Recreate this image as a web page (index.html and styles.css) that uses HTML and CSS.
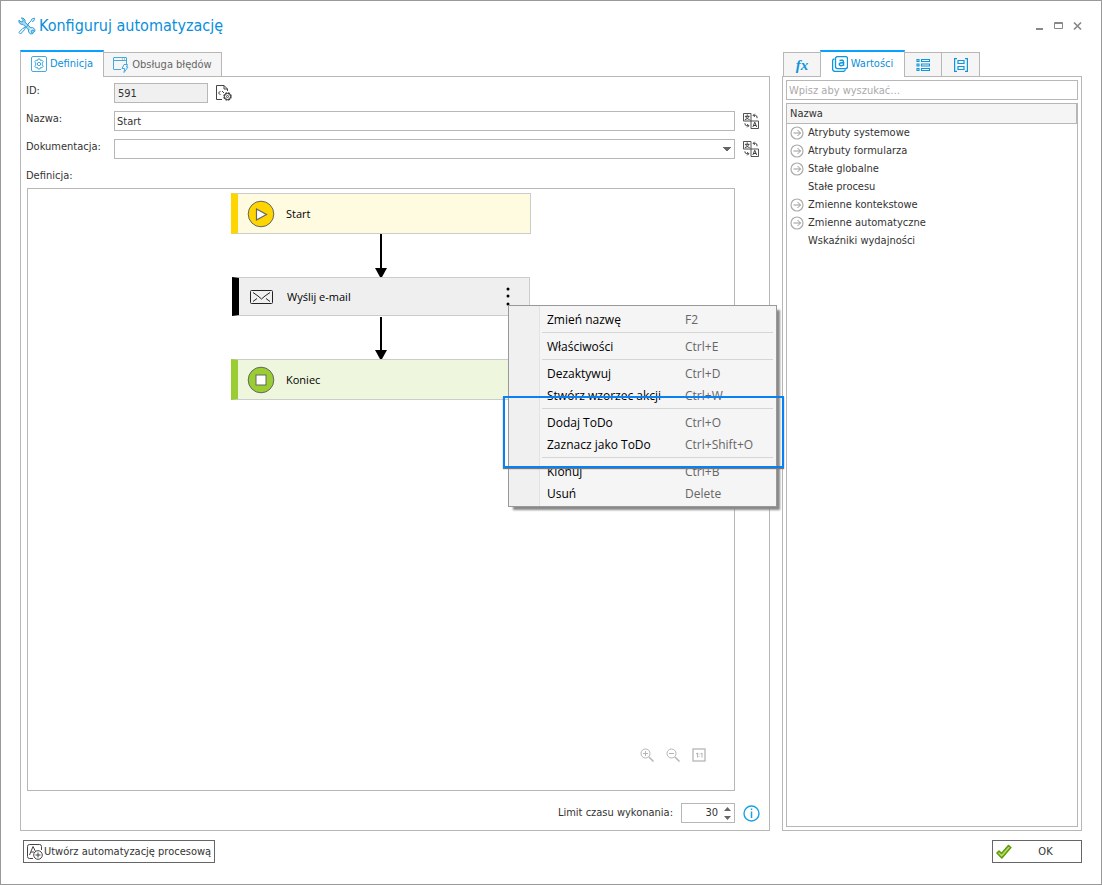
FILE: index.html
```
<!DOCTYPE html>
<html lang="pl">
<head>
<meta charset="utf-8">
<title>Konfiguruj automatyzację</title>
<link rel="stylesheet" href="styles.css">
</head>
<body>
<svg class="defs" aria-hidden="true">
  <symbol id="translate" viewBox="0 0 17 17">
    <path d="M.5.5h8v8h-8zM8.500 8.500h8v8h-8z" fill="none" stroke="#444"/>
    <path d="M4.500 1.500V3M2 3.500h5M3 3.500c.5 2 2 3 4 3.500M6 3.500c-.5 2-2 3-4 3.500" fill="none" stroke="#333"/>
    <path d="M10.500 14.800l2-5 2 5M11.200 13.300h2.600" fill="none" stroke="#333"/>
    <path d="M11 2.500h2.500q1.500 0 1.500 3M12.500 .8l-1.700 1.700 1.700 1.700M2 11q0 2.500 2 2.500h2M4.500 11.800l1.700 1.700-1.700 1.700" fill="none" stroke="#333"/>
  </symbol>
  <symbol id="expand" viewBox="0 0 14 14">
    <circle cx="7" cy="7" r="6" fill="none" stroke="#aaa" stroke-width="1.200"/>
    <path d="M3.500 7h7M7.500 4l3 3-3 3" fill="none" stroke="#999"/>
  </symbol>
</svg>
<div class="window">
  <header class="titlebar">
    <svg class="title-icon" viewBox="0 0 18 18" fill="none" stroke="#2a9bd8">
      <path d="M7 5.200l8.500 8.300a1.500 1.500 0 0 1-2.200 2.200L5 7.300a3.300 3.300 0 0 1-4-4.200l2 1.800 1.800-.4.400-1.700L3.300 1A3.300 3.300 0 0 1 7 5.200z" fill="#a9d9f2"/>
      <path d="M16.500 1l-2.800 1.200-.6 1.700L9.500 7.500M7.700 9.500L6 11l-1 .2L1 15.300 2.500 17l4-4.300.2-1L11 7.500M14 4.500l1.700-.5 1-2.700"/>
      <path d="M11 12.200a3 3 0 0 0 3.800 4.400l-1.600-1.700.5-1.500 1.600-.3 1.500 1.400a3 3 0 0 0-4-3.700" fill="#d8effa"/>
    </svg>
    <h1 class="title">Konfiguruj automatyzację</h1>
    <div class="window-buttons">
      <button aria-label="Minimalizuj"><svg viewBox="0 0 10 10"><path d="M1 8h7" stroke="#888" stroke-width="2"/></svg></button>
      <button aria-label="Maksymalizuj"><svg viewBox="0 0 10 10"><path d="M.5 1.500h8v6h-8zM.5 2.500h8" fill="none" stroke="#888"/></svg></button>
      <button aria-label="Zamknij"><svg viewBox="0 0 10 10"><path d="M1 1.500l7 7M8 1.500l-7 7" stroke="#888" stroke-width="1.700"/></svg></button>
    </div>
  </header>

  <main class="content">
    <section class="pane">
      <div class="tabs" role="tablist">
        <button class="tab tab-active tab-definition" role="tab" aria-selected="true">
          <svg class="icon16" viewBox="0 0 16 16" fill="none" stroke="#45a9df"><rect x=".5" y=".5" width="15" height="15" rx="1.500"/><circle cx="8" cy="8" r="1.700"/><path d="M7 3h2l.5 1.500 1.500-.3 1.300 1.600-1 1.200v2l1 1.200-1.300 1.600-1.500-.3L9 13H7l-.5-1.500-1.500.3-1.300-1.600 1-1.200V7l-1-1.200L5 4.200l1.500.3z"/></svg>
          <span>Definicja</span>
        </button>
        <button class="tab tab-errors" role="tab" aria-selected="false">
          <svg class="icon16" viewBox="0 0 16 16" fill="none" stroke="#45a9df"><path d="M8 12.500H1a.5.5 0 0 1-.5-.5V1A.5.5 0 0 1 1 .5h12a.5.500 0 0 1 .5.500v6M.5 3.500h13M9 2h1M11 2h1M11 7.500h3.500l-1 2.500h1.500l-4 5.500.7-4H9z"/></svg>
          <span>Obsługa błędów</span>
        </button>
      </div>
      <div class="panel form-panel">
        <div class="field">
          <label for="id">ID:</label>
          <input class="box id-box" id="id" value="591" readonly>
          <button class="bare id-icon" aria-label="Konfiguracja ID"><svg class="icon16" viewBox="0 0 16 16" fill="none" stroke="#444"><path d="M6 14.500H.5V.5H8L11.500 4v2M8 .5V4h3.500M4.500 6L2.500 8l2 2M6 6l2 2"/><circle cx="11.500" cy="11.500" r="3.500" stroke-width="1.500" stroke-dasharray="2 .75"/><circle cx="11.500" cy="11.500" r="3"/><circle cx="11.500" cy="11.500" r="1"/></svg></button>
        </div>
        <div class="field">
          <label for="name">Nazwa:</label>
          <input class="box" id="name" value="Start">
          <button class="bare" aria-label="Tłumacz nazwę"><svg class="icon16"><use href="#translate"/></svg></button>
        </div>
        <div class="field">
          <label for="doc">Dokumentacja:</label>
          <select class="box drop" id="doc"><option></option></select>
          <button class="bare" aria-label="Tłumacz dokumentację"><svg class="icon16"><use href="#translate"/></svg></button>
        </div>
        <div class="canvas-label">Definicja:</div>
        <div class="canvas">
          <div class="flow">
            <div class="node node-start">
              <svg class="node-icon" viewBox="0 0 28 28"><circle cx="14" cy="14" r="12.800" fill="#ffd500" stroke="#666"/><path d="M9.500 9v11l10-5.500z" fill="#fff" stroke="#666" stroke-width="1.200"/></svg>
              <span>Start</span>
            </div>
            <svg class="arrow" viewBox="0 0 12 43"><path d="M6 0v36" stroke="#000" stroke-width="2"/><path d="M0 34h12l-5 9H5z"/></svg>
            <div class="node node-mail">
              <svg class="node-icon" viewBox="0 0 28 28" fill="none" stroke="#222"><rect x="2.500" y="7.500" width="22" height="13" rx="1"/><path d="M5 9.500l5 3.500 3.500 3 3.500-3 5-3.500M5 18.500l4-3M22 18.500l-4-3"/></svg>
              <span>Wyślij e-mail</span>
              <button class="bare more" aria-label="Więcej"><svg viewBox="0 0 4 20"><circle cx="2" cy="2" r="1.500"/><circle cx="2" cy="9" r="1.500"/><circle cx="2" cy="17" r="1.500"/></svg></button>
              <div class="popup">
                <div class="menu" role="menu">
                  <button class="item" role="menuitem"><span>Zmień nazwę</span><kbd>F2</kbd></button>
                  <hr>
                  <button class="item" role="menuitem"><span>Właściwości</span><kbd>Ctrl+E</kbd></button>
                  <hr>
                  <button class="item" role="menuitem"><span>Dezaktywuj</span><kbd>Ctrl+D</kbd></button>
                  <button class="item" role="menuitem"><span>Stwórz wzorzec akcji</span><kbd>Ctrl+W</kbd></button>
                  <hr>
                  <button class="item" role="menuitem"><span>Dodaj ToDo</span><kbd>Ctrl+O</kbd></button>
                  <button class="item" role="menuitem"><span>Zaznacz jako ToDo</span><kbd>Ctrl+Shift+O</kbd></button>
                  <hr>
                  <button class="item" role="menuitem"><span>Klonuj</span><kbd>Ctrl+B</kbd></button>
                  <button class="item" role="menuitem"><span>Usuń</span><kbd>Delete</kbd></button>
                </div>
                <div class="highlight"></div>
              </div>
            </div>
            <svg class="arrow" viewBox="0 0 12 43"><path d="M6 1v35" stroke="#000" stroke-width="2"/><path d="M0 34h12l-5 9H5z"/></svg>
            <div class="node node-end">
              <svg class="node-icon" viewBox="0 0 28 28"><circle cx="14" cy="14" r="12.800" fill="#9acd32" stroke="#666"/><rect x="9" y="9" width="10" height="10" fill="#fff" stroke="#666"/></svg>
              <span>Koniec</span>
            </div>
          </div>
          <div class="zoom-tools">
            <button class="bare" aria-label="Powiększ"><svg class="icon14" viewBox="0 0 14 14" fill="none" stroke="#b5b5b5"><circle cx="5.500" cy="5.500" r="4.500"/><path d="M9 9l4.500 4.500" stroke-width="1.500"/><path d="M3 5.500h5M5.500 3v5"/></svg></button>
            <button class="bare" aria-label="Pomniejsz"><svg class="icon14" viewBox="0 0 14 14" fill="none" stroke="#b5b5b5"><circle cx="5.500" cy="5.500" r="4.500"/><path d="M9 9l4.500 4.500" stroke-width="1.500"/><path d="M3 5.500h5"/></svg></button>
            <button class="bare" aria-label="Skala 1:1"><svg class="icon14" viewBox="0 0 14 14" fill="none" stroke="#b5b5b5"><rect x="1" y="1" width="12" height="12" stroke-width="1.300"/><path d="M4 6l1.500-1v4.500M8.500 6l1.500-1v4.500M7 5.500v1M7 8v1"/></svg></button>
          </div>
        </div>
        <div class="limit">
          <label for="limit">Limit czasu wykonania:</label>
          <div class="spin box">
            <input id="limit" value="30" inputmode="numeric">
            <div class="spin-buttons">
              <button class="bare" aria-label="Zwiększ"><svg viewBox="0 0 7 4"><path d="M0 4l3.500-4L7 4z" fill="#666"/></svg></button>
              <button class="bare" aria-label="Zmniejsz"><svg viewBox="0 0 7 4"><path d="M0 0l3.500 4L7 0z" fill="#666"/></svg></button>
            </div>
          </div>
          <button class="bare" aria-label="Informacja"><svg class="icon17" viewBox="0 0 17 17"><circle cx="8.500" cy="8.500" r="7.500" fill="none" stroke="#1ba1e2" stroke-width="1.400"/><path d="M8.500 3.500V5M8.500 6.500V13" stroke="#1ba1e2" stroke-width="1.500"/></svg></button>
        </div>
      </div>
    </section>

    <aside class="pane side">
      <div class="tabs side-tabs" role="tablist">
        <button class="tab tab-icon" role="tab" aria-label="Funkcje"><span class="fx">fx</span></button>
        <button class="tab tab-active tab-values" role="tab" aria-selected="true">
          <svg class="icon16" viewBox="0 0 16 16" fill="none" stroke="#0f95dc"><rect x="3.500" y=".6" width="12" height="12" rx="2" stroke-width="1.300"/><path d="M2.500 3Q.6 3 .6 5v8q0 2.400 2.400 2.400h8q2 0 2.500-2" stroke-width="1.300"/><path d="M7.500 4.500q4-1.200 4 1.500v3.800M11.500 6.800q-4.200-.5-4.200 1.500 0 2.200 4.200.8" stroke-width="1.500"/></svg>
          <span>Wartości</span>
        </button>
        <button class="tab tab-icon" role="tab" aria-label="Lista"><svg class="icon14" viewBox="0 0 14 14" fill="none" stroke="#0f95dc" stroke-width="1.100"><path d="M1 1.500h2v2H1zM1 6h2v2H1zM1 10.500h2v2H1zM5.500 1.500h8v2h-8zM5.500 6h8v2h-8zM5.500 10.500h8v2h-8z"/></svg></button>
        <button class="tab tab-icon" role="tab" aria-label="Kontekst"><svg class="icon14" viewBox="0 0 14 14" fill="none" stroke="#0f95dc" stroke-width="1.200"><path d="M3 .6H.6v12.800H3M11 .6h2.400v12.800H11M4 2.500h6v3H4zM4 8.500h6v3H4z"/></svg></button>
      </div>
      <div class="panel side-panel">
        <input class="box search" type="search" placeholder="Wpisz aby wyszukać…" aria-label="Szukaj">
        <div class="tree">
          <div class="tree-head">Nazwa</div>
          <ul class="tree-list">
            <li><svg><use href="#expand"/></svg><span>Atrybuty systemowe</span></li>
            <li><svg><use href="#expand"/></svg><span>Atrybuty formularza</span></li>
            <li><svg><use href="#expand"/></svg><span>Stałe globalne</span></li>
            <li><svg></svg><span>Stałe procesu</span></li>
            <li><svg><use href="#expand"/></svg><span>Zmienne kontekstowe</span></li>
            <li><svg><use href="#expand"/></svg><span>Zmienne automatyczne</span></li>
            <li><svg></svg><span>Wskaźniki wydajności</span></li>
          </ul>
        </div>
      </div>
    </aside>
  </main>

  <footer class="footer">
    <button class="action">
      <svg class="icon16" viewBox="0 0 16 16" fill="none" stroke="#444"><path d="M6 14.500H2.500q-2 0-2-2v-10q0-2 2-2h10q2 0 2 2V6M2.500 11L6 2.500l2.500 5M4 8h3"/><circle cx="11" cy="11" r="4.300"/><path d="M8.500 11h5M11 8.500v5"/></svg>
      <span>Utwórz automatyzację procesową</span>
    </button>
    <button class="action ok">
      <svg class="icon16" viewBox="0 0 16 16"><path d="M1 9l2-2 2.500 2.500L12.500 1.500l2.300 2L5.800 14z" fill="#b9da7d" stroke="#5f9e00" stroke-width="1.600" stroke-linejoin="round"/></svg>
      <span>OK</span>
    </button>
  </footer>
</div>
</body>
</html>
```
FILE: styles.css
```
* { box-sizing: border-box; }
body { margin: 0; font: 11px/16px "DejaVu Sans Condensed", "Open Sans", sans-serif; color: #333; background: #fff; }
button, input, select { font: inherit; color: inherit; margin: 0; }
button { padding: 0; border: 0; background: none; }
svg { display: block; flex: none; }
.defs { position: absolute; width: 0; height: 0; }
.icon14 { width: 14px; height: 14px; }
.icon16 { width: 16px; height: 16px; }
.icon17 { width: 17px; height: 17px; }
.bare { flex: none; }

.window { min-height: 100vh; display: flex; flex-direction: column; border: 1px solid #999; padding: 0 19px 21px; }
.titlebar { display: flex; align-items: center; height: 50px; margin: 0 -1px 0 -2px; gap: 3px; }
.title-icon { width: 18px; height: 18px; }
.title { margin: 0; flex: 1; font-size: 16px; line-height: 24px; font-weight: 400; color: #0a8fdc; }
.window-buttons { display: flex; gap: 9px; }
.window-buttons svg { width: 10px; height: 10px; }

.content { flex: 1; display: flex; gap: 12px; }
.pane { flex: 1; min-width: 0; display: flex; flex-direction: column; }
.side { flex: 0 0 300px; }
.tabs { display: flex; align-items: flex-end; height: 27px; margin: -1px 0; }
.side-tabs { padding-left: 1px; }
.tab { display: flex; align-items: center; justify-content: center; gap: 3px; height: 25px; border: 1px solid #b7b7b7; background: #f5f5f5; color: #666; }
.tab-active { position: relative; height: 27px; padding-bottom: 2px; border-top: 2px solid #0aa0ff; border-bottom: 0; background: #fff; color: #0a8fdc; }
.tab + .tab { margin-left: -1px; }
.tab-definition { width: 84px; }
.tab-errors { width: 119px; }
.tab-values { width: 85px; }
.tab-icon { width: 38px; }
.tab-icon:last-child { width: 39px; }
.fx { font: italic bold 15px/16px "Liberation Serif", serif; color: #0f95dc; }
.panel { flex: 1; display: flex; flex-direction: column; border: 1px solid #b7b7b7; }

.form-panel { padding: 6px 9px 7px 5px; gap: 8px; }
.box { height: 20px; border: 1px solid #b7b7b7; border-radius: 0; background: #fff; padding: 0 2px; outline: 0; }
.field { display: grid; grid-template-columns: 88px 1fr 25px; align-items: center; height: 20px; }
.field:first-child { grid-template-columns: 88px 94px 1fr; }
.field label { height: 20px; line-height: 16px; }
.field .box { width: 100%; }
.field .bare { padding-left: 8px; }
.field .id-box { background: #f0f0f0; padding: 0 3px; }
.field .drop {
  appearance: none;
  background-image: linear-gradient(to top right, transparent 50%, #666 50%), linear-gradient(to top left, transparent 50%, #666 50%);
  background-size: 4px 4px;
  background-position: right 7px center, right 3px center;
  background-repeat: no-repeat;
}
.canvas-label { line-height: 18px; height: 13px; }
.canvas { flex: 1; margin: 0 25px 0 1px; border: 1px solid #b7b7b7; display: flex; flex-direction: column; justify-content: space-between; }
.flow { display: flex; flex-direction: column; align-items: center; padding-top: 4px; color: #000; font-family: "Open Sans", sans-serif; }
.node { position: relative; display: flex; align-items: center; gap: 11px; width: 300px; height: 41px; padding: 0 19px 0 9px; border: 1px solid #ccc; border-left: 7px solid #ffd500; background: #fffbe0; }
.node-icon { width: 28px; height: 28px; }
.node-mail { width: 298px; height: 39px; border-left-color: #000; background: #efefef; }
.node-end { border-left-color: #9acd32; background: #eef6de; }
.arrow { width: 12px; height: 43px; }
.more { margin-left: auto; }
.more svg { width: 4px; height: 20px; }
.popup { position: absolute; left: 269px; top: 27px; width: 269px; z-index: 2; font-size: 12px; }
.menu { border: 1px solid #999; padding: 3px 3px 1px 2px; background: linear-gradient(90deg, #f0f0f0 30px, #e2e2e2 30px, #e2e2e2 31px, #f5f5f5 31px); box-shadow: 4px 4px 2px -1px #888; }
.item { display: flex; align-items: center; width: 100%; height: 22px; padding-left: 36px; text-align: left; }
.item span { width: 138px; }
.item kbd { font: inherit; color: #666; }
.menu hr { margin: 1px 0 3px 31px; border: 0; height: 1px; background: #d5d5d5; }
.highlight { position: absolute; left: -5px; right: -7px; top: 91px; height: 72px; border: 2px solid #0a80f5; box-shadow: 0 1px 1px #777; pointer-events: none; }
.zoom-tools { display: flex; justify-content: flex-end; gap: 12px; padding: 0 28px 28px 0; }
.limit { display: flex; align-items: center; justify-content: flex-end; gap: 8px; padding-top: 4px; }
.limit label { line-height: 20px; }
.spin { display: flex; width: 54px; padding: 0 3px 0 0; }
.spin input { width: 0; flex: 1; min-width: 0; padding: 0 6px 0 0; border: 0; outline: 0; text-align: right; background: none; }
.spin-buttons { display: flex; flex-direction: column; justify-content: center; gap: 5px; }
.spin-buttons svg { width: 7px; height: 4px; }

.side-panel { padding: 3px; gap: 3px; }
.search { width: 100%; appearance: none; }
.search::placeholder { color: #aaa; opacity: 1; }
.tree { flex: 1; border: 1px solid #b7b7b7; }
.tree-head { height: 20px; line-height: 20px; padding-left: 3px; background: #f5f5f5; border-bottom: 1px solid #b7b7b7; border-right: 1px solid #b7b7b7; }
.tree-list { list-style: none; margin: 0; padding: 0 0 0 3px; }
.tree-list li { display: flex; align-items: center; gap: 4px; height: 18px; }
.tree-list svg { width: 14px; height: 14px; }
.tree-list span { line-height: 18px; }

.footer { display: flex; justify-content: space-between; padding: 9px 0 0 3px; }
.action { display: flex; align-items: center; gap: 1px; height: 23px; padding: 0 3px; border: 1px solid #666; background: #fff; }
.ok { width: 90px; }
.ok span { flex: 1; text-align: center; }
```
